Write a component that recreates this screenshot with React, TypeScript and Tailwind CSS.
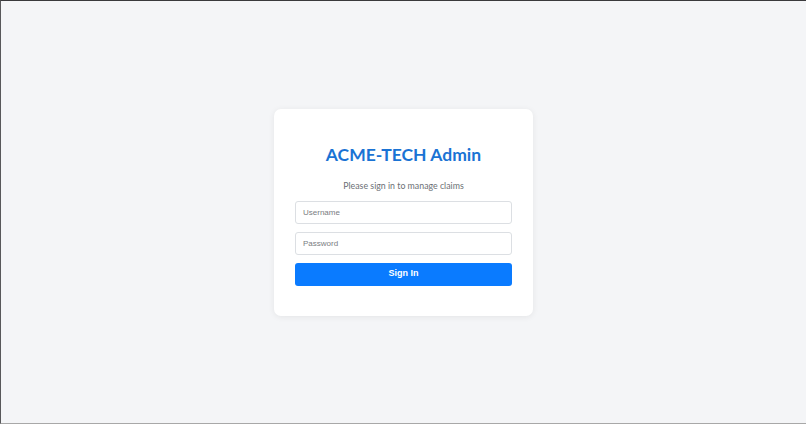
export default function App() {
  return (
    <div className="flex h-[424px] w-[806px] items-center justify-center border-t border-l border-t-[#3a3a3c] border-l-[#58585a] border-b border-b-[#a8a8a8] bg-[#f4f5f7]">
      <div className="w-[259px] rounded-[7px] bg-white px-[21px] pt-[34px] pb-[30px] shadow-[0_1px_6px_rgba(0,0,0,0.07)]">
        <h1 className="text-center font-['Lato',sans-serif] text-[17.5px] leading-[24px] font-bold text-[#1a73d4]">
          ACME-TECH Admin
        </h1>
        <p className="mt-[12px] text-center font-['Lato',sans-serif] text-[8.8px] leading-[13px] text-[#6b6f75]">
          Please sign in to manage claims
        </p>
        <div className="mt-[9px] flex flex-col gap-[8px]">
          <input
            placeholder="Username"
            className="h-[23px] w-full rounded-[3px] border border-[#dcdfe3] bg-white px-[7px] pt-px font-['Liberation_Sans',Arial,sans-serif] text-[8px] text-[#333] placeholder:text-[#7a7d82] outline-none"
          />
          <input
            type="password"
            placeholder="Password"
            className="h-[23px] w-full rounded-[3px] border border-[#dcdfe3] bg-white px-[7px] pt-px font-['Liberation_Sans',Arial,sans-serif] text-[8px] text-[#333] placeholder:text-[#7a7d82] outline-none"
          />
          <button className="h-[23px] w-full rounded-[3px] bg-[#0a7bff] font-['Liberation_Sans',Arial,sans-serif] text-[9px] font-bold text-white">
            Sign In
          </button>
        </div>
      </div>
    </div>
  );
}
